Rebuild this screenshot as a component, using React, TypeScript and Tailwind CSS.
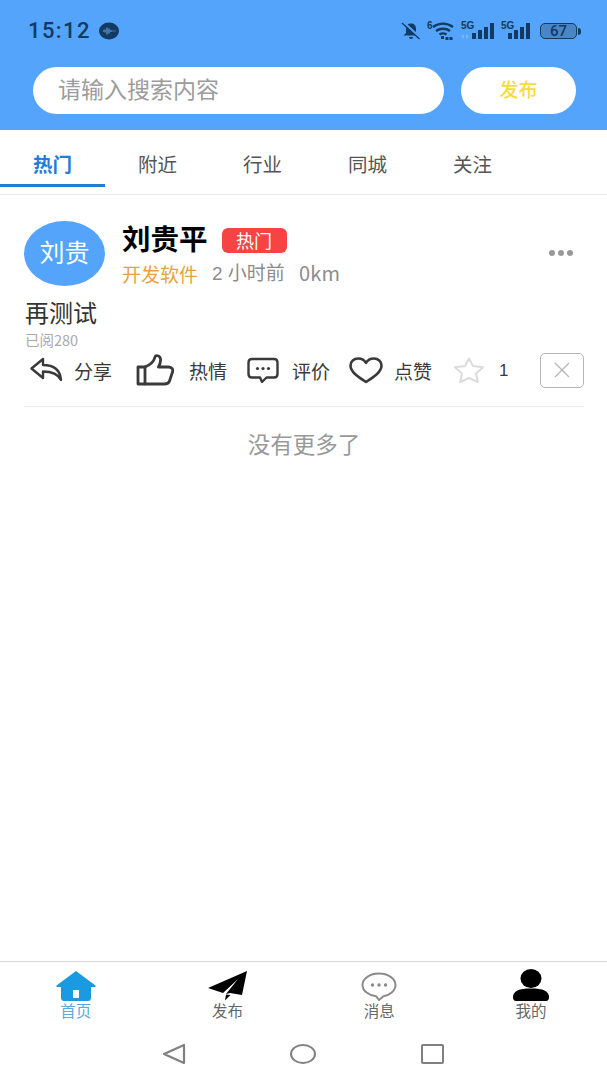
import React from 'react';

const cjk = '"Noto Sans CJK SC", "Noto Sans", sans-serif';
const latin = '"Liberation Sans", "Noto Sans CJK SC", sans-serif';

const tabs = ['热门', '附近', '行业', '同城', '关注'];

function SignalBars({ offset }: { offset: number }) {
  return (
    <svg width="34" height="18" viewBox="0 0 34 18" fill="#123a63">
      <rect x={offset} y="11" width="4" height="6" />
      <rect x={offset + 6} y="8" width="4" height="9" />
      <rect x={offset + 12} y="5" width="4" height="12" />
      <rect x={offset + 18} y="1" width="4" height="16" />
    </svg>
  );
}

function StatusBar() {
  return (
    <div className="h-[67px] flex items-start justify-between pt-[22px] pl-[28px] pr-[26px] text-[#123a63]">
      <div className="flex items-center gap-[8px] h-[18px]">
        <span className="text-[22px] font-medium tracking-[1.4px] leading-none" style={{ fontFamily: 'Roboto, sans-serif' }}>15:12</span>
        <svg width="20" height="18" viewBox="0 0 20 18">
          <ellipse cx="10" cy="9" rx="10" ry="8.500" fill="#123a63" />
          <path d="M4 9h1M6 7.500v3M8 5.500v7M10 6.500v5M12 8v2M14 8.500v1M16 8.500v1" stroke="#6fb0ee" strokeWidth="1" />
        </svg>
      </div>
      <div className="flex items-center h-[18px]">
        <svg width="20" height="20" viewBox="0 0 20 20" fill="#123a63">
          <path d="M10 2.500c-3 0-5 2-5 5v4.500l-2.500 2.500h15L15 12V7.500c0-3-2-5-5-5zM8 16h4c0 1.300-.9 2-2 2s-2-.7-2-2z" />
          <path d="M2.500 1.500 19.500 17" stroke="#54a4fb" strokeWidth="2.500" />
          <path d="M1 2 18.500 18" stroke="#123a63" strokeWidth="1.300" />
        </svg>
        <div className="relative w-[27px] h-[18px] ml-[6px]">
          <span className="absolute left-0 -top-[1px] text-[10px] font-bold leading-none" style={{ fontFamily: '"Liberation Sans", sans-serif' }}>6</span>
          <svg className="absolute left-[5px] top-0" width="22" height="18" viewBox="0 0 22 18" fill="none" stroke="#123a63" strokeWidth="2.400">
            <path d="M1 5c6-4.500 14-4.500 20 0M4 9c4-3 10-3 14 0M7.500 12.500c2-1.300 5-1.300 7 0" />
            <path d="M9 15.500h3M15 15v3M19 15v3" strokeWidth="3" />
          </svg>
        </div>
        <div className="relative w-[34px] h-[18px] ml-[7px]">
          <span className="absolute left-0 -top-[1px] text-[10px] font-bold leading-none" style={{ fontFamily: '"Liberation Sans", sans-serif' }}>5G</span>
          <svg className="absolute left-0 bottom-[1px]" width="10" height="5" viewBox="0 0 10 5" fill="#7fb4e6">
            <path d="M0 2.500 3 0v5zM5 0l3 2.500L5 5z" />
          </svg>
          <SignalBars offset={11} />
        </div>
        <div className="relative w-[30px] h-[18px] ml-[6px]">
          <span className="absolute left-0 -top-[1px] text-[10px] font-bold leading-none" style={{ fontFamily: '"Liberation Sans", sans-serif' }}>5G</span>
          <SignalBars offset={7} />
        </div>
        <div className="ml-[9px] w-[37px] h-[16px] rounded-[5px] border-[1.500px] border-[#123a63] bg-[#4a86c4] flex items-center justify-center">
          <span className="text-[15px] leading-none font-medium" style={{ fontFamily: 'Roboto, sans-serif' }}>67</span>
        </div>
        <div className="ml-[1px] w-[3px] h-[7px] rounded-r-sm bg-[#123a63]" />
      </div>
    </div>
  );
}

function ShareIcon() {
  return (
    <svg width="33" height="26" viewBox="0 0 33 26" fill="none" stroke="#3a3a3a" strokeWidth="2.400" strokeLinejoin="round" strokeLinecap="round">
      <path d="M1.500 11.500 13 2v6c9 0 17 3 18 15-3-6-8-8.500-18-8.500V21z" />
    </svg>
  );
}

function ThumbIcon() {
  return (
    <svg width="38" height="32" viewBox="0 0 38 32" fill="none" stroke="#3a3a3a" strokeWidth="2.800" strokeLinejoin="round" strokeLinecap="round">
      <path d="M9 13H2v17h7z" />
      <path d="M9 13c5-2 9-6 10-10 .5-2 5-2 5.500 2 .4 3-1 6-2 8h10c3 0 5 2 4 5l-3 9c-.7 2-2 3-5 3H9" />
    </svg>
  );
}

function CommentIcon() {
  return (
    <svg width="32" height="27" viewBox="0 0 32 27" fill="none">
      <path d="M5 2h22c2 0 3.500 1.500 3.500 3.500V17c0 2-1.500 3.500-3.500 3.500h-7.500L15 25l-2-4.500H5c-2 0-3.500-1.500-3.500-3.500V5.500C1.500 3.500 3 2 5 2z" stroke="#3a3a3a" strokeWidth="2.400" strokeLinejoin="round" />
      <circle cx="10.500" cy="11.500" r="1.600" fill="#3a3a3a" />
      <circle cx="16" cy="11.500" r="1.600" fill="#3a3a3a" />
      <circle cx="21.500" cy="11.500" r="1.600" fill="#3a3a3a" />
    </svg>
  );
}

function HeartIcon() {
  return (
    <svg width="34" height="27" viewBox="0 0 34 27" fill="none" stroke="#3a3a3a" strokeWidth="2.600" strokeLinejoin="round">
      <path d="M17 25C9 20 1.500 15 1.500 8.500 1.500 4.500 5 1.500 9 1.500c3.500 0 6.500 1.500 8 4.500 1.500-3 4.500-4.500 8-4.500 4 0 7.500 3 7.500 7C32.500 15 25 20 17 25z" />
    </svg>
  );
}

function StarIcon() {
  return (
    <svg width="32" height="26" viewBox="0 0 32 26" fill="none" stroke="#dcdcdc" strokeWidth="2" strokeLinejoin="round">
      <path d="M16 1.500 20 9l10 1.300-7 6.200 1.800 8.500L16 21l-8.800 4L9 16.500 2 10.300 12 9z" />
    </svg>
  );
}

function HomeIcon() {
  return (
    <svg width="40" height="30" viewBox="0 0 40 30">
      <path d="M20 0 39.500 14.500V16H35v11c0 1.700-1.300 3-3 3H8c-1.700 0-3-1.300-3-3V16H.5v-1.500z" fill="#1a9ae0" />
      <rect x="17" y="19" width="6" height="8" fill="#fff" />
    </svg>
  );
}

function PlaneIcon() {
  return (
    <svg width="40" height="30" viewBox="0 0 40 30" fill="#000">
      <path d="M39 0 0 17l15 5 15-14-12 15 4-1 12 2z" />
      <path d="M18 23.500 22.500 24 17 29.500z" />
    </svg>
  );
}

function MessageIcon() {
  return (
    <svg width="36" height="29" viewBox="0 0 36 29" fill="none">
      <path d="M18 1.500c9 0 16.500 5 16.500 11.500 0 6-6 10.500-12 11.200L18 28l-3-3.800C8 23.500 1.500 19 1.500 13 1.500 6.500 9 1.500 18 1.500z" stroke="#8a8a8a" strokeWidth="2" strokeLinejoin="round" />
      <circle cx="11.500" cy="13" r="1.700" fill="#8a8a8a" />
      <circle cx="18" cy="13" r="1.700" fill="#8a8a8a" />
      <circle cx="24.500" cy="13" r="1.700" fill="#8a8a8a" />
    </svg>
  );
}

function UserIcon() {
  return (
    <svg width="36" height="32" viewBox="0 0 36 32" fill="#000">
      <ellipse cx="18" cy="9.500" rx="10.500" ry="9.500" />
      <path d="M0 28c0-6 6-8.500 18-8.500S36 22 36 28c0 2.500-1 4-3 4H3c-2 0-3-1.500-3-4z" />
    </svg>
  );
}

function NavItem({ label, active, children }: { label: string; active?: boolean; children: React.ReactNode }) {
  return (
    <div className="flex-1 flex flex-col items-center">
      <div className="h-[32px] flex items-end justify-center">{children}</div>
      <span className={`-mt-[1px] text-[15.5px] leading-[20px] ${active ? 'text-[#5fa8dc]' : 'text-[#666666]'}`}>{label}</span>
    </div>
  );
}

export default function App() {
  return (
    <div className="w-[607px] h-[1080px] flex flex-col bg-white overflow-hidden" style={{ fontFamily: cjk }}>
      {/* Header */}
      <div className="h-[130px] bg-[#54a4fb] shrink-0">
        <StatusBar />
        <div className="flex items-center pl-[33px] pr-[31px] gap-[17px]">
          <div className="flex-1 h-[47px] bg-white rounded-full flex items-center pl-[25px] pb-[4px]">
            <span className="text-[23px] text-[#9c9c9c] leading-none">请输入搜索内容</span>
          </div>
          <div className="w-[115px] h-[47px] bg-white rounded-full flex items-center justify-center pb-[4px]">
            <span className="text-[19px] font-medium text-[#f8dc3c] leading-none">发布</span>
          </div>
        </div>
      </div>

      {/* Tabs */}
      <div className="h-[65px] shrink-0 flex border-b border-[#e8e8e8]">
        {tabs.map((t, i) => (
          <div key={t} className={`w-[105px] h-[57px] flex items-center justify-center border-b-[3px] pt-[14px] ${i === 0 ? 'border-[#1f7fd8]' : 'border-transparent'}`}>
            <span className={`text-[19.5px] leading-none ${i === 0 ? 'font-bold text-[#1f7fd8]' : 'text-[#555555]'}`}>{t}</span>
          </div>
        ))}
      </div>

      {/* List */}
      <div className="flex-1 pl-[24px] pr-[23px]">
        <div className="pt-[26px] border-b border-[#ececec] h-[212px]">
          <div className="flex items-start">
            <div className="w-[81px] h-[65px] rounded-[50%] bg-[#54a4fb] flex items-center justify-center pb-[4px] text-white text-[25px] leading-none shrink-0">刘贵</div>
            <div className="ml-[17px] flex-1">
              <div className="flex items-center h-[40px] -mt-[1px]">
                <span className="text-[28.500px] font-bold text-black leading-none mb-[4px]">刘贵平</span>
                <span className="ml-[14px] w-[65px] h-[25px] rounded-[6px] bg-[#f64444] text-white text-[18px] leading-none flex items-center justify-center">热门</span>
                <div className="ml-auto mr-[11px] mt-[26px] flex gap-[3px]">
                  <span className="w-[6px] h-[6px] rounded-full bg-[#999999]" />
                  <span className="w-[6px] h-[6px] rounded-full bg-[#999999]" />
                  <span className="w-[6px] h-[6px] rounded-full bg-[#999999]" />
                </div>
              </div>
              <div className="flex items-center mt-[3px] leading-none text-[19px]">
                <span className="text-[#e6a23c]">开发软件</span>
                <span className="ml-[14px] text-[#8c8c8c]" style={{ fontFamily: latin }}>2 小时前</span>
                <span className="ml-[14px] text-[#8c8c8c] text-[20px] tracking-[0.3px]">0km</span>
              </div>
            </div>
          </div>
          <div className="mt-[11px] ml-px text-[24px] leading-[30px] text-[#333333]">再测试</div>
          <div className="mt-[5px] ml-px text-[14.500px] leading-[16px] text-[#aaaaaa]">已阅280</div>
          <div className="flex items-center h-[40px] mt-[2px] pl-[6px] text-[19px] text-[#3a3a3a]">
            <ShareIcon />
            <span className="ml-[11px] leading-none">分享</span>
            <span className="ml-[24px]"><ThumbIcon /></span>
            <span className="ml-[15px] leading-none">热情</span>
            <span className="ml-[20px]"><CommentIcon /></span>
            <span className="ml-[13px] leading-none">评价</span>
            <span className="ml-[19px]"><HeartIcon /></span>
            <span className="ml-[11px] leading-none">点赞</span>
            <span className="ml-[21px]"><StarIcon /></span>
            <span className="ml-[14px] leading-none text-[17px]" style={{ fontFamily: '"Liberation Sans", sans-serif' }}>1</span>
            <div className="ml-auto w-[44px] h-[35px] rounded-[5px] border-[1.500px] border-[#b5b5b5] flex items-center justify-center">
              <svg width="16" height="16" viewBox="0 0 16 16" stroke="#b5b5b5" strokeWidth="1.300">
                <path d="M1 1l14 14M15 1 1 15" />
              </svg>
            </div>
          </div>
        </div>
        <div className="mt-[22px] text-center text-[22.500px] leading-[28px] text-[#999999]">没有更多了</div>
      </div>

      {/* Bottom nav */}
      <div className="h-[119px] shrink-0 border-t border-[#d8d8d8]">
        <div className="flex pt-[7px] h-[69px]">
          <NavItem label="首页" active><HomeIcon /></NavItem>
          <NavItem label="发布"><PlaneIcon /></NavItem>
          <NavItem label="消息"><MessageIcon /></NavItem>
          <NavItem label="我的"><UserIcon /></NavItem>
        </div>
        <div className="flex items-center h-[46px] pl-[162px]">
          <svg width="24" height="22" viewBox="0 0 24 22" fill="none" stroke="#808080" strokeWidth="2.200" strokeLinejoin="round">
            <path d="M22 2v18L2 11z" />
          </svg>
          <span className="ml-[104px] w-[26px] h-[20px] rounded-[50%] border-2 border-[#808080]" />
          <span className="ml-[105px] w-[23px] h-[20px] rounded-[2px] border-2 border-[#808080]" />
        </div>
      </div>
    </div>
  );
}
